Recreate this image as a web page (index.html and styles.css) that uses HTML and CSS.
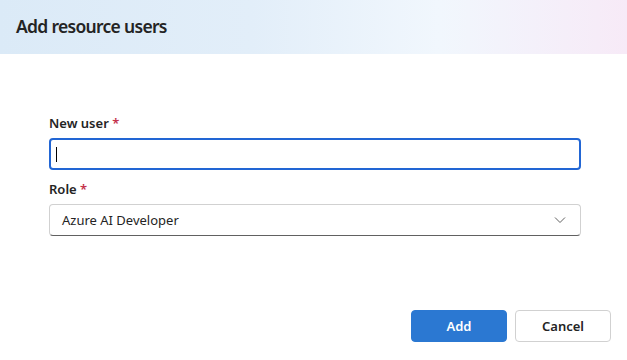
FILE: index.html
```html
<!DOCTYPE html>
<html>
<head>
<link rel="stylesheet" href="styles.css">
</head>
<body>

<div class="dialog">
  <div class="header">
    <h1 class="title">Add resource users</h1>
  </div>

  <div class="form">
    <div class="field">
      <label class="label">New user <span class="req">*</span></label>
      <div class="input focused"><span class="caret"></span></div>
    </div>
    <div class="field">
      <label class="label">Role <span class="req">*</span></label>
      <div class="input select">
        <span class="value">Azure AI Developer</span>
        <svg class="chevron" width="12" height="12" viewBox="0 0 12 12">
          <path d="M1 3.5 L6 8.5 L11 3.5" fill="none" stroke="#616161" stroke-width="1"/>
        </svg>
      </div>
    </div>
  </div>

  <div class="footer">
    <button class="btn primary">Add</button>
    <button class="btn">Cancel</button>
  </div>
</div>

</body>
</html>
```

FILE: styles.css
```css
body {
  margin: 0;
  background: #ffffff;
  font-family: "Noto Sans", "Open Sans", sans-serif;
  color: #242424;
}

/* header strip with the soft blue to pink wash */
.header {
  height: 54px;
  display: flex;
  align-items: center;
  padding-left: 16px;
  padding-bottom: 2px;
  box-sizing: border-box;
  background: linear-gradient(90deg, #dbeaf7 0%, #e2eef9 40%, #f1f7fd 70%, #f7eaf7 100%);
}
.title {
  margin: 0;
  font-size: 17.5px;
  font-weight: 600;
  letter-spacing: -0.7px;
  color: #242424;
}

.form {
  padding: 59px 46px 0 49px;
  display: flex;
  flex-direction: column;
  gap: 9px;
}
.field {
  display: flex;
  flex-direction: column;
}
.label {
  font-size: 13px;
  font-weight: 600;
  line-height: 20px;
  margin-bottom: 5px;
}
.req {
  color: #c4314b;
}

.input {
  height: 32px;
  box-sizing: border-box;
  border: 1px solid #d1d1d1;
  border-bottom-color: #616161;
  border-radius: 4px;
  display: flex;
  align-items: center;
  padding: 0 12px;
}
.input.focused {
  border: 2px solid #2266d4;
  padding-left: 5px;
}
.caret {
  display: block;
  width: 1px;
  height: 15px;
  background: #000;
}
.select {
  justify-content: space-between;
  font-size: 13px;
}
.chevron {
  margin-right: 2px;
}

.footer {
  display: flex;
  justify-content: flex-end;
  gap: 8px;
  padding: 74px 16px 0 0;
}
.btn {
  width: 96px;
  height: 32px;
  border-radius: 4px;
  border: 1px solid #d1d1d1;
  background: #fff;
  font-family: "Noto Sans", "Open Sans", sans-serif;
  font-size: 13px;
  font-weight: 600;
  color: #242424;
}
.btn.primary {
  background: #2b78d2;
  border-color: #2b78d2;
  color: #fff;
}
```
